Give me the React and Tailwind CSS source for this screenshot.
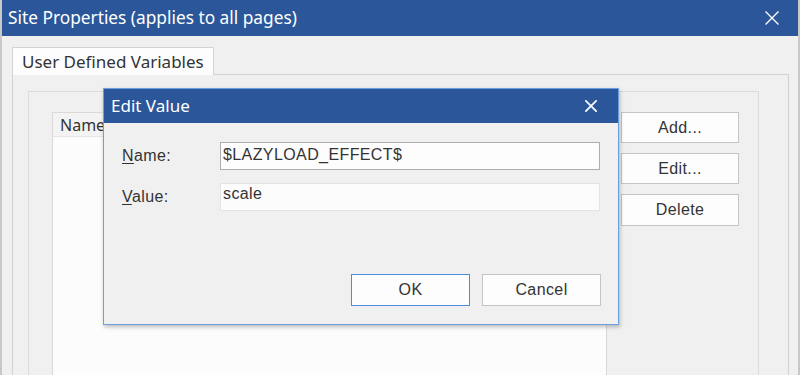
import React from "react";

const segoe = { fontFamily: '"Noto Sans", "Open Sans", sans-serif' };
const arial = { fontFamily: '"Liberation Sans", Arial, sans-serif' };

function CloseIcon({ size = 14, stroke = 1.4 }) {
    return (
        <svg width={size} height={size} viewBox="0 0 14 14" fill="none">
            <path d="M1 1 L13 13 M13 1 L1 13" stroke="white" strokeWidth={stroke} strokeLinecap="square" />
        </svg>
    );
}

function Button({ children, primary }) {
    return (
        <button
            className={
                primary
                    ? "w-[119px] h-[32px] bg-[#fdfdfd] border border-[#4f8ddb] text-[16px] tracking-[0.4px] text-[#333]"
                    : "w-[119px] h-[32px] bg-[#fdfdfd] border border-[#c4c4c4] text-[16px] tracking-[0.4px] text-[#333]"
            }
            style={arial}
        >
            {children}
        </button>
    );
}

export default function App() {
    return (
        <div className="relative w-[800px] h-[375px] overflow-hidden bg-[#f0f0f0] border-l-2 border-r-2 border-[#c8c8c8]">
            {/* main window title */}
            <div className="h-[36px] bg-[#2b579a] flex items-center justify-between pl-[6px] pr-[19px] text-white text-[17.3px]" style={segoe}>
                <span>Site Properties (applies to all pages)</span>
                <CloseIcon size={14} stroke={1.3} />
            </div>

            <div className="pl-[10px] pr-[9px] pt-[11px]">
                {/* tab */}
                <div className="w-[202px] h-[28px] bg-[#fdfdfd] border border-b-0 border-[#d4d4d4] pl-[9px] pt-[1px] text-[17px] text-[#333] relative z-10" style={segoe}>
                    User Defined Variables
                </div>
                {/* tab panel */}
                <div className="-mt-px h-[320px] border border-[#d2d2d2] bg-[#f0f0f0] pl-[15px] pr-[29px] pt-[16px]">
                    {/* group box */}
                    <div className="h-[300px] border border-[#dcdcdc] pl-[23px] pr-[16px] pt-[20px] flex gap-[14px]">
                        {/* list */}
                        <div className="w-[555px] h-[280px] border border-[#d9d9d9] bg-[#fcfcfc]">
                            <div className="h-[24px] bg-[#f3f3f3] border-b border-[#e5e5e5] pl-[7px] text-[16px] text-[#333] leading-[24px]" style={segoe}>
                                Name
                            </div>
                        </div>
                        {/* buttons */}
                        <div className="flex flex-col gap-[10px] text-[16px] tracking-[0.4px] text-[#333]" style={arial}>
                            <button className="w-[118px] h-[31px] bg-[#fdfdfd] border border-[#c4c4c4]">Add...</button>
                            <button className="w-[118px] h-[31px] bg-[#fdfdfd] border border-[#c4c4c4]">Edit...</button>
                            <button className="w-[118px] h-[32px] bg-[#fdfdfd] border border-[#c4c4c4]">Delete</button>
                        </div>
                    </div>
                </div>
            </div>

            {/* Edit Value dialog */}
            <div className="absolute left-[101px] top-[88px] w-[516px] h-[237px] bg-[#f0f0f0] border border-[#6a9fe0] shadow-[1px_2px_4px_rgba(0,0,0,0.25)] flex flex-col">
                <div className="h-[34px] bg-[#2b579a] flex items-center justify-between pl-[7px] pr-[21px] text-white text-[17px]" style={segoe}>
                    <span>Edit Value</span>
                    <CloseIcon size={12} stroke={2} />
                </div>
                <div className="pl-[18px] pr-[17px] pt-[19px] text-[16px] tracking-[0.4px] text-[#333]" style={arial}>
                    <div className="flex items-center">
                        <span className="w-[98px]"><span className="underline underline-offset-2">N</span>ame:</span>
                        <div className="w-[380px] h-[28px] bg-[#fdfdfd] border border-[#adadad] px-[2px] leading-[24px]">$LAZYLOAD_EFFECT$</div>
                    </div>
                    <div className="flex items-center mt-[13px]">
                        <span className="w-[98px]"><span className="underline underline-offset-2">V</span>alue:</span>
                        <div className="w-[380px] h-[28px] bg-[#fcfcfc] border border-[#e3e3e3] px-[2px] leading-[20px]">scale</div>
                    </div>
                    <div className="flex justify-end gap-[12px] mt-[63px]">
                        <Button primary>OK</Button>
                        <Button>Cancel</Button>
                    </div>
                </div>
            </div>
        </div>
    );
}
